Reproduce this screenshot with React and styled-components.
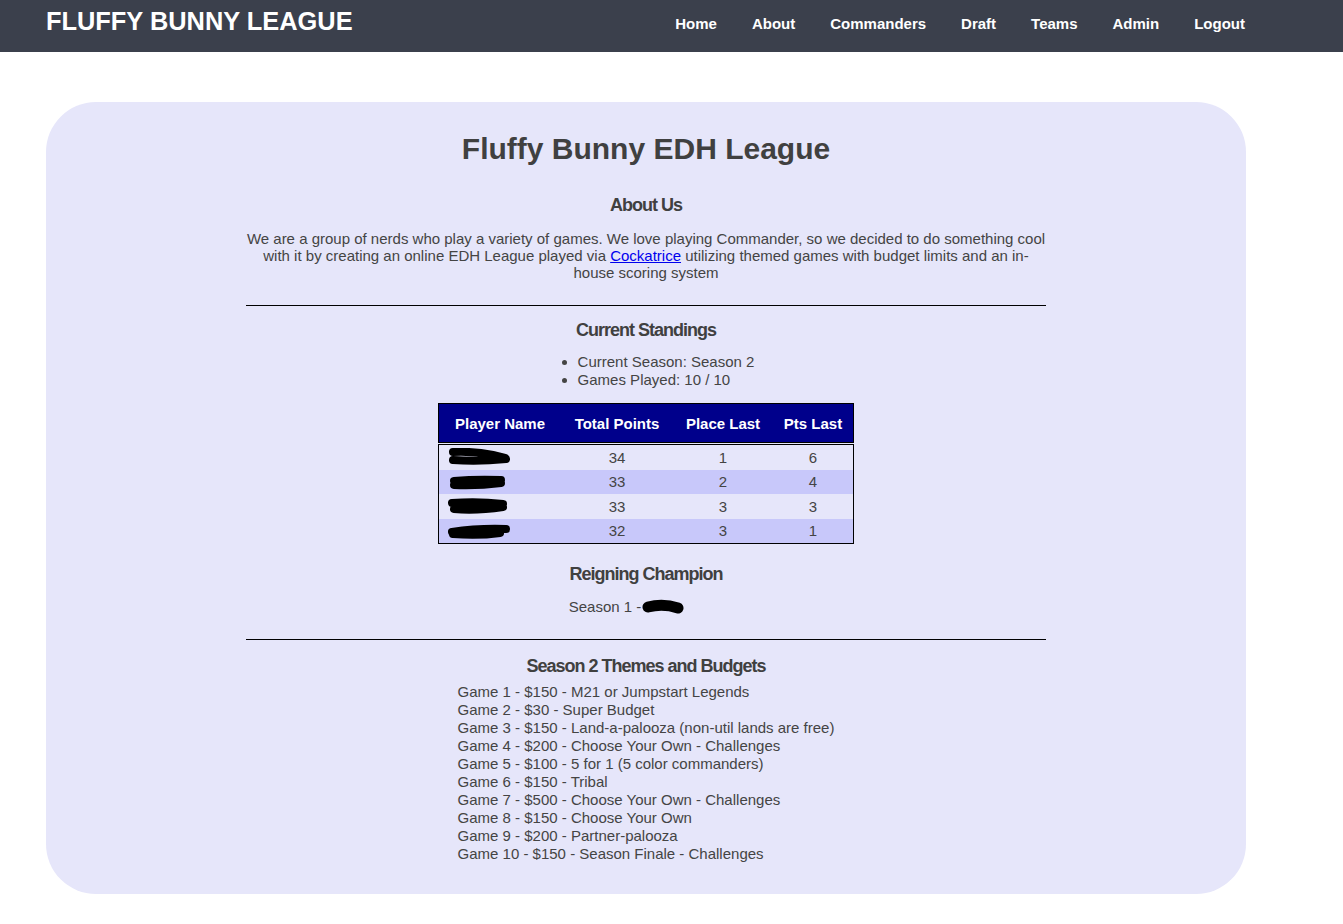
import React from 'react';
import styled, { createGlobalStyle } from 'styled-components';

const GlobalStyle = createGlobalStyle`
  body {
    margin: 0;
    background: #fff;
    font-family: 'Liberation Sans', Arial, sans-serif;
    color: #444;
  }
`;

const Header = styled.header`
  height: 52px;
  background: #3b404c;
  display: flex;
  justify-content: space-between;
  align-items: flex-start;
  padding: 0 97px 0 46px;
`;

const Brand = styled.div`
  color: #fff;
  font-size: 25.4px;
  font-weight: 700;
  line-height: 42px;
`;

const Nav = styled.nav`
  display: flex;
  gap: 35px;
  padding: 3px 1px 0 0;
`;

const NavLink = styled.a`
  color: #fff;
  font-size: 15px;
  font-weight: 700;
  line-height: 42px;
  text-decoration: none;
`;

const Panel = styled.main`
  width: 1200px;
  margin: 50px 0 0 46px;
  background: #e6e6fa;
  border-radius: 50px;
  padding: 28px 0 31px;
  box-sizing: border-box;
  text-align: center;
`;

const Title = styled.h1`
  margin: 0;
  font-size: 30px;
  line-height: 37px;
  font-weight: 700;
  color: #404040;
`;

const Section = styled.section`
  width: 800px;
  margin: 0 auto;
`;

const Heading = styled.h3`
  margin: ${(p) => p.$top || 0}px 0 0;
  font-size: 18px;
  line-height: 22px;
  font-weight: 700;
  letter-spacing: -1px;
  color: #404040;
`;

const Para = styled.p`
  margin: ${(p) => p.$top || 0}px 0 0;
  font-size: 15px;
  line-height: 17px;
`;

const Link = styled.a`
  color: #0000ee;
  text-decoration: underline;
`;

const Rule = styled.hr`
  margin: ${(p) => p.$top || 24}px 0 0;
  border: none;
  border-top: 1px solid #000;
  height: 0;
`;

const List = styled.ul`
  display: inline-block;
  text-align: left;
  margin: 12px 0 0;
  padding-left: 40px;
  font-size: 15px;
  line-height: 18px;
`;

const Table = styled.div`
  width: 416px;
  margin: 14px auto 0;
  font-size: 15px;
`;

const Row = styled.div`
  display: grid;
  grid-template-columns: 122px 112px 100px 80px;
  align-items: center;
  height: ${(p) => (p.$head ? '38px' : '24.5px')};
  background: ${(p) => (p.$head ? '#00008b' : p.$alt ? '#c8c8fa' : '#e6e6fa')};
  color: ${(p) => (p.$head ? '#fff' : '#444')};
  font-weight: ${(p) => (p.$head ? 700 : 400)};
`;

const HeadBox = styled.div`
  border: 1px solid #000;
`;

const BodyBox = styled.div`
  border: 1px solid #000;
  margin-top: 1px;
`;

const Cell = styled.div`
  padding-left: ${(p) => (p.$left ? '9px' : 0)};
  display: flex;
  justify-content: ${(p) => (p.$left ? 'flex-start' : 'center')};
  align-items: center;
`;

const Champ = styled.div`
  margin-top: 13px;
  font-size: 15px;
  line-height: 18px;
  display: flex;
  justify-content: center;
  align-items: center;
`;

const Games = styled.div`
  display: inline-block;
  text-align: left;
  margin-top: 6px;
  font-size: 15px;
  line-height: 18px;
`;

const Blob = ({ variant = 0 }) => {
  const paths = [
    'M5 4 Q25 3 45 7 L57 10 M5 12 Q30 14 58 11',
    'M6 8 Q28 6 53 7 M6 12 Q30 13 53 10',
    'M4 6 Q30 4 55 7 M6 12 Q28 14 55 10',
    'M4 10 Q30 6 58 7 M5 12 Q30 14 52 11',
  ];
  return (
    <svg width="62" height="18" viewBox="0 0 62 18">
      <path d={paths[variant]} stroke="#000" strokeWidth="8" strokeLinecap="round" fill="none" />
    </svg>
  );
};

const standings = [
  [34, 1, 6],
  [33, 2, 4],
  [33, 3, 3],
  [32, 3, 1],
];

const games = [
  'Game 1 - $150 - M21 or Jumpstart Legends',
  'Game 2 - $30 - Super Budget',
  'Game 3 - $150 - Land-a-palooza (non-util lands are free)',
  'Game 4 - $200 - Choose Your Own - Challenges',
  'Game 5 - $100 - 5 for 1 (5 color commanders)',
  'Game 6 - $150 - Tribal',
  'Game 7 - $500 - Choose Your Own - Challenges',
  'Game 8 - $150 - Choose Your Own',
  'Game 9 - $200 - Partner-palooza',
  'Game 10 - $150 - Season Finale - Challenges',
];

function App() {
  return (
    <>
      <GlobalStyle />
      <Header>
        <Brand>FLUFFY BUNNY LEAGUE</Brand>
        <Nav>
          {['Home', 'About', 'Commanders', 'Draft', 'Teams', 'Admin', 'Logout'].map((n) => (
            <NavLink key={n} href="#">{n}</NavLink>
          ))}
        </Nav>
      </Header>
      <Panel>
        <Title>Fluffy Bunny EDH League</Title>
        <Section>
          <Heading $top={27}>About Us</Heading>
          <Para $top={14}>
            We are a group of nerds who play a variety of games. We love playing Commander, so we decided to do
            something cool with it by creating an online EDH League played via <Link href="#">Cockatrice</Link>{' '}
            utilizing themed games with budget limits and an in-house scoring system
          </Para>
          <Rule />
          <Heading $top={13}>Current Standings</Heading>
          <List>
            <li>Current Season: Season 2</li>
            <li>Games Played: 10 / 10</li>
          </List>
          <Table>
            <HeadBox>
              <Row $head>
                <Cell>Player Name</Cell>
                <Cell>Total Points</Cell>
                <Cell>Place Last</Cell>
                <Cell>Pts Last</Cell>
              </Row>
            </HeadBox>
            <BodyBox>
              {standings.map((r, i) => (
                <Row key={i} $alt={i % 2 === 1}>
                  <Cell $left><Blob variant={i} /></Cell>
                  <Cell>{r[0]}</Cell>
                  <Cell>{r[1]}</Cell>
                  <Cell>{r[2]}</Cell>
                </Row>
              ))}
            </BodyBox>
          </Table>
          <Heading $top={19}>Reigning Champion</Heading>
          <Champ>
            Season 1 -
            <svg width="82" height="16" viewBox="0 0 82 16">
              <path d="M7 8 Q22 4 37 9" stroke="#000" strokeWidth="11" strokeLinecap="round" fill="none" />
            </svg>
          </Champ>
          <Rule $top={23} />
          <Heading $top={15}>Season 2 Themes and Budgets</Heading>
          <Games>
            {games.map((g) => (
              <div key={g}>{g}</div>
            ))}
          </Games>
        </Section>
      </Panel>
    </>
  );
}

export default App;
